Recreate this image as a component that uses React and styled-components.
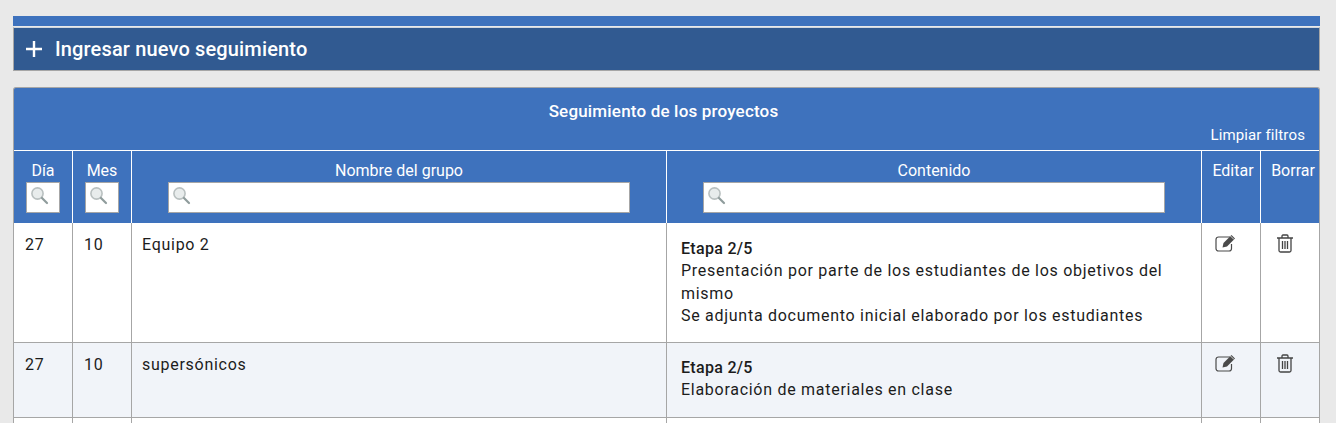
import React from 'react';
import styled, { createGlobalStyle } from 'styled-components';

const GlobalStyle = createGlobalStyle`
  html, body {
    margin: 0;
    padding: 0;
    height: 423px;
    overflow: hidden;
    background: #e9e9e9;
    font-family: Roboto, "Liberation Sans", sans-serif;
  }
`;

const Page = styled.div`
  padding: 16px 16px 0 13px;
`;

const TopBar = styled.div`
  height: 10px;
  background: #3e72bd;
`;

const AddPanel = styled.div`
  height: 42px;
  margin-top: 1px;
  display: flex;
  align-items: center;
  padding-left: 11px;
  gap: 12px;
  background: #315a91;
  border: 1px solid #a6a6a6;
  border-top: 1px solid #cfd6df;
  color: #fff;
  font-size: 20px;
  font-weight: 500;
  letter-spacing: 0.15px;
`;

const ListPanel = styled.div`
  margin-top: 16px;
  background: #3e72bd;
  border-radius: 3px 3px 0 0;
  border-top: 1px solid #a6a6a6;
  border-left: 1px solid #a6a6a6;
  border-right: 1px solid #a6a6a6;
`;

const PanelTitle = styled.div`
  height: 39px;
  box-sizing: border-box;
  padding: 13px 6px 0 0;
  text-align: center;
  color: #fff;
  font-size: 17px;
  font-weight: 500;
  letter-spacing: 0.18px;
`;

const ClearRow = styled.div`
  height: 23px;
  padding-right: 14px;
  text-align: right;
  color: #fff;
  font-size: 15px;
  letter-spacing: 0.13px;
  line-height: 16px;
`;

const Table = styled.table`
  width: 100%;
  table-layout: fixed;
  border-collapse: separate;
  border-spacing: 0;
`;

const HeadCell = styled.th`
  box-sizing: border-box;
  width: ${p => p.$width || 'auto'};
  height: 73px;
  padding: 11px 0 0 ${p => p.$shift || '0'};
  vertical-align: top;
  background: #3e72bd;
  border-top: 1px solid #fff;
  border-left: ${p => (p.$first ? 'none' : '1px solid #fff')};
  color: #fff;
  font-size: 16px;
  font-weight: 400;
  text-align: center;
  line-height: 18px;
`;

const SearchBox = styled.div`
  box-sizing: border-box;
  width: ${p => p.$width};
  height: 31px;
  margin: 2px auto 0;
  display: flex;
  align-items: flex-start;
  padding: 3px 0 0 3px;
  background: #fff;
  border: 1px solid #a6a6a6;
`;

const Row = styled.tr`
  background: ${p => (p.$alt ? '#f1f4f9' : '#fff')};
`;

const Cell = styled.td`
  box-sizing: border-box;
  height: ${p => p.$height || 'auto'};
  padding: ${p => p.$pad || '11px 10px 0'};
  vertical-align: top;
  border-bottom: 1px solid #a6a6a6;
  border-left: ${p => (p.$first ? 'none' : '1px solid #a6a6a6')};
  color: #1c1c1c;
  font-size: 16px;
  line-height: 22.4px;
  letter-spacing: 0.72px;
`;

const Stage = styled.div`
  font-weight: 500;
  letter-spacing: 0.3px;
`;

const IconSlot = styled.div`
  line-height: 0;
`;

const Plus = () => (
  <svg width="18" height="18" viewBox="0 0 18 18">
    <path d="M9 1v16M1 9h16" stroke="#fff" strokeWidth="2.4" />
  </svg>
);

const Lens = () => (
  <svg width="20" height="20" viewBox="0 0 20 20">
    <circle cx="7.5" cy="7.5" r="5.6" fill="#e8ecec" stroke="#b9c0c0" strokeWidth="1.6" />
    <path d="M12 12l5 5" stroke="#8f9c9c" strokeWidth="2.2" strokeLinecap="round" />
  </svg>
);

const EditIcon = () => (
  <svg width="23" height="19" viewBox="0 0 23 19" fill="none">
    <path d="M15 4H3.500A2.500 2.500 0 0 0 1 6.500v9A2.500 2.500 0 0 0 3.500 18H14a2.500 2.500 0 0 0 2.500-2.500V11" stroke="#4a4a4a" strokeWidth="1.2" />
    <path d="M8.500 10l8-8 3.500 3.500-8 8-4.500 1z" fill="#4a4a4a" />
    <path d="M15.500 3l3.500 3.500" stroke="#fff" strokeWidth="0.8" />
  </svg>
);

const TrashIcon = () => (
  <svg width="18" height="19" viewBox="0 0 18 19" fill="none" stroke="#444" strokeWidth="1.3">
    <path d="M1 4h16M6 4V2.200Q6 1 7 1h4q1 0 1 1.200V4" />
    <path d="M3 4v12.500Q3 18 4.500 18h9q1.500 0 1.500-1.500V4" />
    <path d="M6.500 7v8M9 7v8M11.500 7v8" />
  </svg>
);

const rows = [
  {
    day: 27, month: 10, group: 'Equipo 2', height: '120px', contentTop: '15px',
    stage: 'Etapa 2/5',
    lines: [
      'Presentación por parte de los estudiantes de los objetivos del mismo',
      'Se adjunta documento inicial elaborado por los estudiantes',
    ],
  },
  {
    day: 27, month: 10, group: 'supersónicos', height: '75px', contentTop: '14px', alt: true,
    stage: 'Etapa 2/5',
    lines: ['Elaboración de materiales en clase'],
  },
];

export default function App() {
  return (
    <Page>
      <GlobalStyle />
      <TopBar />
      <AddPanel>
        <Plus />
        Ingresar nuevo seguimiento
      </AddPanel>
      <ListPanel>
        <PanelTitle>Seguimiento de los proyectos</PanelTitle>
        <ClearRow>Limpiar filtros</ClearRow>
        <Table>
          <thead>
            <tr>
              <HeadCell $first $width="58px">
                Día
                <SearchBox $width="34px"><Lens /></SearchBox>
              </HeadCell>
              <HeadCell $width="59px">
                Mes
                <SearchBox $width="34px"><Lens /></SearchBox>
              </HeadCell>
              <HeadCell $width="535px">
                Nombre del grupo
                <SearchBox $width="462px"><Lens /></SearchBox>
              </HeadCell>
              <HeadCell $width="535px">
                Contenido
                <SearchBox $width="462px"><Lens /></SearchBox>
              </HeadCell>
              <HeadCell $width="59px" $shift="4px">Editar</HeadCell>
              <HeadCell $shift="6px">Borrar</HeadCell>
            </tr>
          </thead>
          <tbody>
            {rows.map((row, i) => (
              <Row key={i} $alt={row.alt}>
                <Cell $first $height={row.height} $pad="11px 11px 0">{row.day}</Cell>
                <Cell $pad="11px 11px 0">{row.month}</Cell>
                <Cell>{row.group}</Cell>
                <Cell $pad={`${row.contentTop} 14px 0`}>
                  <Stage>{row.stage}</Stage>
                  {row.lines.map(line => <div key={line}>{line}</div>)}
                </Cell>
                <Cell $pad="10px 0 0 13px"><IconSlot><EditIcon /></IconSlot></Cell>
                <Cell $pad="11px 0 0 15px"><IconSlot><TrashIcon /></IconSlot></Cell>
              </Row>
            ))}
            <Row>
              <Cell $first $height="75px" />
              <Cell />
              <Cell />
              <Cell />
              <Cell />
              <Cell />
            </Row>
          </tbody>
        </Table>
      </ListPanel>
    </Page>
  );
}
